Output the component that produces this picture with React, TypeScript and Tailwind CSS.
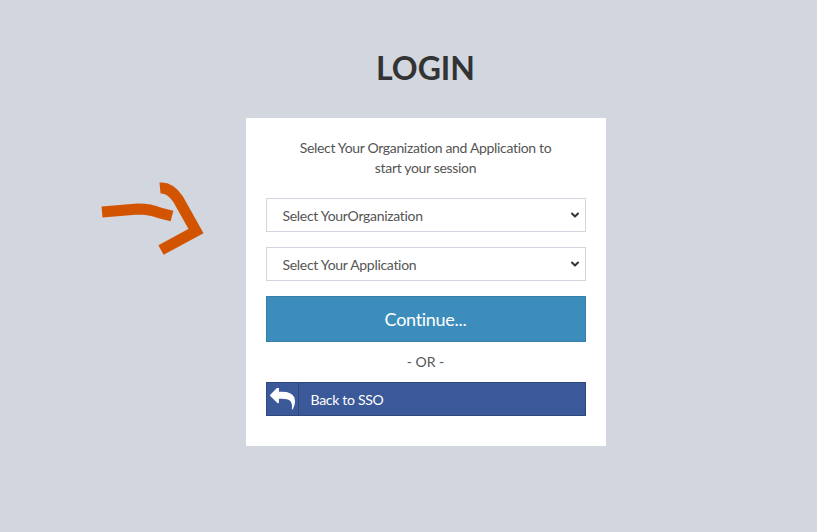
import { ChevronDown } from 'lucide-react';

const font = { fontFamily: '"Source Sans Pro", Lato, "Noto Sans", sans-serif' };

function Arrow() {
  return (
    <svg className="absolute left-[96px] top-[180px]" width="112" height="82" viewBox="96 180 112 82" fill="none">
      <path d="M102 212 L138 209 Q150 209 160 213 L172 216" stroke="#d35400" strokeWidth="11" strokeLinejoin="round" />
      <path d="M160 188 Q170 187 178 199 L196 231 L161 250" stroke="#d35400" strokeWidth="11" strokeLinejoin="miter" />
    </svg>
  );
}

function SelectBox({ label }: { label: string }) {
  return (
    <div className="relative h-[34px] border border-[#d2d6de] bg-white">
      <select className="h-full w-full appearance-none bg-transparent pl-4 text-[14px] tracking-[-0.3px] text-[#555] outline-none" style={font}>
        <option>{label}</option>
      </select>
      <ChevronDown className="pointer-events-none absolute right-[4px] top-[10px] text-[#333]" size={12} strokeWidth={4} />
    </div>
  );
}

export default function App() {
  return (
    <div className="relative flex min-h-[532px] w-full flex-col items-center bg-[#d2d6de] pl-[34px]" style={font}>
      <Arrow />
      <h1 className="mt-[48px] text-[32px] font-bold leading-[40px] text-[#333]">LOGIN</h1>
      <div className="mt-[30px] flex w-[360px] flex-col bg-white px-5 pb-[30px] pt-[20px]">
        <p className="px-[30px] text-center text-[14px] leading-[20px] tracking-[-0.33px] text-[#555]">
          Select Your Organization and Application to start your session
        </p>
        <div className="mt-[20px] flex flex-col gap-[15px]">
          <SelectBox label="Select YourOrganization" />
          <SelectBox label="Select Your Application" />
        </div>
        <button className="mt-[15px] h-[46px] border border-[#367fa9] bg-[#3c8dbc] text-[18px] tracking-[-0.3px] text-white">Continue...</button>
        <p className="my-[10px] text-center text-[14px] leading-[20px] text-[#555]">- OR -</p>
        <button className="flex h-[34px] items-stretch border border-[#2f477a] bg-[#3b5998] text-left text-[14px] tracking-[-0.3px] text-white">
          <span className="flex w-[32px] items-center justify-center border-r border-[#2f477a]">
            <svg width="25" height="22" viewBox="0 128 1792 1560">
              <path
                fill="white"
                d="M1792 1120q0 166-127 451-3 7-10.5 24t-13.5 30-13 22q-12 17-28 17-15 0-23.5-10t-8.5-25q0-9 2.5-26.5t2.5-23.5q5-68 5-123 0-101-17.5-181t-48.5-138.5-80-101-105.5-69.5-133-42.5-154-21.5-175.5-6h-224v256q0 26-19 45t-45 19-45-19l-512-512q-19-19-19-45t19-45l512-512q19-19 45-19t45 19 19 45v256h224q713 0 875 403 53 134 53 333z"
              />
            </svg>
          </span>
          <span className="flex items-center pl-3">Back to SSO</span>
        </button>
      </div>
    </div>
  );
}
